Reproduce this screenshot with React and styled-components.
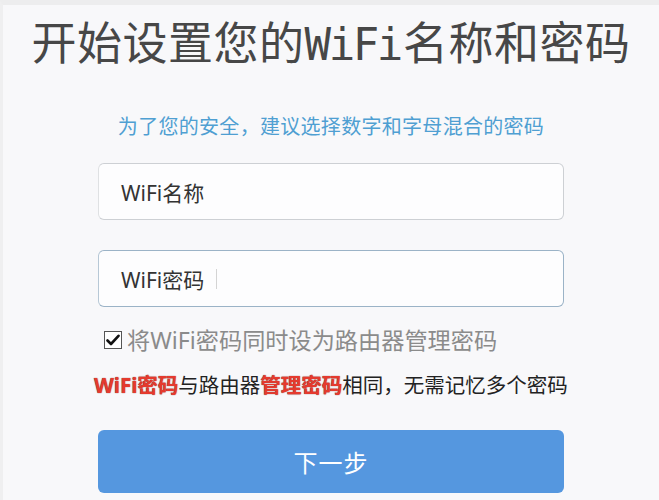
import React from 'react';
import styled, { createGlobalStyle } from 'styled-components';

const GlobalStyle = createGlobalStyle`
  html, body {
    margin: 0;
    padding: 0;
    background: #f7f7f9;
  }
`;

const CJK = `"Noto Sans", "Noto Sans CJK SC", sans-serif`;

const Page = styled.div`
  width: 659px;
  height: 500px;
  box-sizing: border-box;
  border-top: 5px solid #ededee;
  border-left: 3px solid #efeff0;
  background: #f8f8fa;
  display: flex;
  flex-direction: column;
  align-items: center;
  padding-top: 11px;
  font-family: ${CJK};
  overflow: hidden;
`;

const Title = styled.h1`
  margin: 0;
  font-family: "Noto Sans CJK SC", sans-serif;
  font-weight: 400;
  font-size: 45px;
  line-height: 50px;
  color: #474747;
  white-space: nowrap;
  letter-spacing: 0.5px;
`;

const Mono = styled.span`
  font-family: "DejaVu Sans Mono", "Liberation Mono", monospace;
  font-size: 44px;
  letter-spacing: -2.4px;
  margin-right: 2px;
`;

const Hint = styled.p`
  margin: 45px 0 0;
  font-size: 20px;
  line-height: 24px;
  letter-spacing: 0.3px;
  color: #4f9fd2;
  white-space: nowrap;
`;

const Form = styled.div`
  width: 466px;
  display: flex;
  flex-direction: column;
`;

const Field = styled.div`
  box-sizing: border-box;
  height: 57px;
  display: flex;
  align-items: center;
  padding-left: 22px;
  margin-top: ${p => p.$gap}px;
  background: #fdfdfe;
  border: 1.5px solid ${p => (p.$focused ? '#9bb3c7' : '#cdd0d4')};
  border-left-color: ${p => (p.$focused ? '#b7c8d6' : '#dfe1e3')};
  border-radius: 6px;
  font-size: 21px;
  color: #333;
`;

const Caret = styled.span`
  display: inline-block;
  width: 1px;
  height: 20px;
  margin-left: 12px;
  background: #d4d4d4;
`;

const CheckRow = styled.label`
  display: flex;
  align-items: center;
  gap: 5px;
  margin-top: 18px;
  padding-left: 6px;
  font-size: 23.2px;
  line-height: 30px;
  color: #8b8b8b;
  white-space: nowrap;
`;

const Box = styled.span`
  box-sizing: border-box;
  width: 18px;
  height: 18px;
  border: 1.5px solid #555;
  background: #fff;
  display: flex;
  align-items: center;
  justify-content: center;
`;

const Note = styled.p`
  margin: 17px 0 0 -4px;
  font-size: 20.5px;
  line-height: 26px;
  color: #222;
  white-space: nowrap;
`;

const Red = styled.b`
  color: #e53a2e;
  font-weight: 700;
  text-shadow: 0 0 1px #6a1b14;
`;

const NextButton = styled.button`
  margin-top: 32px;
  height: 63px;
  border: none;
  border-radius: 6px;
  background: #5597df;
  color: #fff;
  font-family: ${CJK};
  font-size: 24px;
  letter-spacing: 1px;
  cursor: pointer;
`;

export default function App() {
  return (
    <>
      <GlobalStyle />
      <Page>
        <Title>
          开始设置您的<Mono>WiFi</Mono>名称和密码
        </Title>
        <Hint>为了您的安全，建议选择数字和字母混合的密码</Hint>
        <Form>
          <Field $gap={24}>WiFi名称</Field>
          <Field $gap={30} $focused>
            WiFi密码<Caret />
          </Field>
          <CheckRow>
            <Box>
              <svg width="14" height="12" viewBox="0 0 14 12">
                <path d="M1.5 6.5 L5 10 L12.5 1.8" fill="none" stroke="#111" strokeWidth="2.6" strokeLinecap="round" strokeLinejoin="round" />
              </svg>
            </Box>
            将WiFi密码同时设为路由器管理密码
          </CheckRow>
          <Note>
            <Red>WiFi密码</Red>与路由器<Red>管理密码</Red>相同，无需记忆多个密码
          </Note>
          <NextButton>下一步</NextButton>
        </Form>
      </Page>
    </>
  );
}
